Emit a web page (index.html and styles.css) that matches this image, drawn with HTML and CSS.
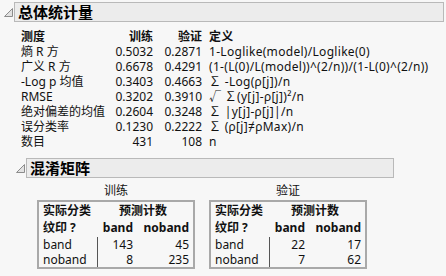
FILE: index.html
```html
<!DOCTYPE html>
<html lang="zh">
<head>
    <meta charset="UTF-8">
    <meta name="viewport" content="width=device-width, initial-scale=1.0">
    <title>总体统计量</title>
    <link rel="stylesheet" href="styles.css">
</head>
<body>
    <div class="outline">
        <div class="outline-head">
            <svg class="toggle" width="9" height="9" viewBox="0 0 9 9"><polygon points="8.5,0.5 8.5,8.5 0.5,8.5"/></svg>
            <div class="title">总体统计量</div>
        </div>

        <div class="stats">
            <div class="hd">测度</div><div class="hd num">训练</div><div class="hd num">验证</div><div class="hd def">定义</div>
            <div>熵 R 方</div><div class="num">0.5032</div><div class="num">0.2871</div><div class="def">1-Loglike(model)/Loglike(0)</div>
            <div>广义 R 方</div><div class="num">0.6678</div><div class="num">0.4291</div><div class="def">(1-(L(0)/L(model))^(2/n))/(1-L(0)^(2/n))</div>
            <div>-Log p 均值</div><div class="num">0.3403</div><div class="num">0.4663</div><div class="def">∑ -Log(ρ[j])/n</div>
            <div>RMSE</div><div class="num">0.3202</div><div class="num">0.3910</div><div class="def">√ ∑(y[j]-ρ[j])²/n</div>
            <div>绝对偏差的均值</div><div class="num">0.2604</div><div class="num">0.3248</div><div class="def">∑ |y[j]-ρ[j]|/n</div>
            <div>误分类率</div><div class="num">0.1230</div><div class="num">0.2222</div><div class="def">∑ (ρ[j]≠ρMax)/n</div>
            <div>数目</div><div class="num">431</div><div class="num">108</div><div class="def">n</div>
        </div>

        <div class="outline nested">
            <div class="outline-head">
                <svg class="toggle" width="9" height="9" viewBox="0 0 9 9"><polygon points="8.5,0.5 8.5,8.5 0.5,8.5"/></svg>
                <div class="title">混淆矩阵</div>
            </div>

            <div class="matrices">
                <div class="matrix-group">
                    <div class="caption">训练</div>
                    <table class="matrix">
                        <tr class="top"><th class="label">实际分类</th><th colspan="2" class="center">预测计数</th></tr>
                        <tr class="sub"><th class="label">纹印 ?</th><th>band</th><th>noband</th></tr>
                        <tr><td class="label">band</td><td class="sep">143</td><td>45</td></tr>
                        <tr><td class="label">noband</td><td class="sep">8</td><td>235</td></tr>
                    </table>
                </div>
                <div class="matrix-group">
                    <div class="caption">验证</div>
                    <table class="matrix">
                        <tr class="top"><th class="label">实际分类</th><th colspan="2" class="center">预测计数</th></tr>
                        <tr class="sub"><th class="label">纹印 ?</th><th>band</th><th>noband</th></tr>
                        <tr><td class="label">band</td><td class="sep">22</td><td>17</td></tr>
                        <tr><td class="label">noband</td><td class="sep">7</td><td>62</td></tr>
                    </table>
                </div>
            </div>
        </div>
    </div>
</body>
</html>
```

FILE: styles.css
```css
body {
    margin: 0;
    padding: 2px 2px 0 4px;
    background-color: #f7f7f7;
    color: #111;
    font-family: "Noto Sans", "Noto Sans CJK SC", sans-serif;
    font-size: 12px;
}

/* disclosure header */
.outline-head {
    display: flex;
    align-items: center;
    height: 20px;
}
.toggle {
    flex: 0 0 9px;
    margin-right: 1px;
}
.toggle polygon {
    fill: #e2e2e2;
    stroke: #8c8c8c;
    stroke-width: 1;
}
.title {
    flex: 1;
    box-sizing: border-box;
    height: 20px;
    padding-left: 3px;
    background-color: #ececec;
    border: 1px solid #b9b9b9;
    font-size: 15px;
    font-weight: bold;
    line-height: 18px;
    color: #000;
}

/* summary statistics */
.stats {
    display: grid;
    grid-template-columns: 94px 38px 49px auto;
    grid-auto-rows: 15px;
    margin: 7px 0 0 17px;
    line-height: 15px;
    white-space: nowrap;
}
.stats .hd {
    font-weight: bold;
    height: 16px;
}
.stats .num {
    text-align: right;
}
.stats .def {
    padding-left: 7px;
    letter-spacing: 0.3px;
}

.nested {
    margin: 9px 0 0 12px;
}
.nested .title {
    flex: 0 0 368px;
}

/* confusion matrices */
.matrices {
    display: flex;
    gap: 14px;
    margin: 5px 0 0 21px;
}
.matrix-group {
    display: flex;
    flex-direction: column;
    align-items: center;
}
.caption {
    line-height: 16px;
    margin-bottom: 1px;
}
.matrix {
    border: 2px solid #a9a9a9;
    border-spacing: 0;
    width: 158px;
}
.matrix th, .matrix td {
    padding: 0;
    text-align: right;
    white-space: nowrap;
}
.matrix th {
    font-weight: bold;
}
.matrix .label {
    width: 54px;
    padding-left: 4px;
    text-align: left;
}
.matrix .center {
    text-align: center;
    padding-right: 4px;
}
.matrix tr.top th {
    height: 17px;
    line-height: 17px;
}
.matrix tr.sub th {
    height: 18px;
    line-height: 18px;
}
.matrix td {
    height: 15px;
    line-height: 15px;
}
.matrix th:nth-child(3), .matrix td:nth-child(3) {
    padding-right: 4px;
}
.matrix th:nth-child(2), .matrix td:nth-child(2) {
    width: 35px;
}
.matrix .sep {
    border-left: 1px solid #555;
}
```
